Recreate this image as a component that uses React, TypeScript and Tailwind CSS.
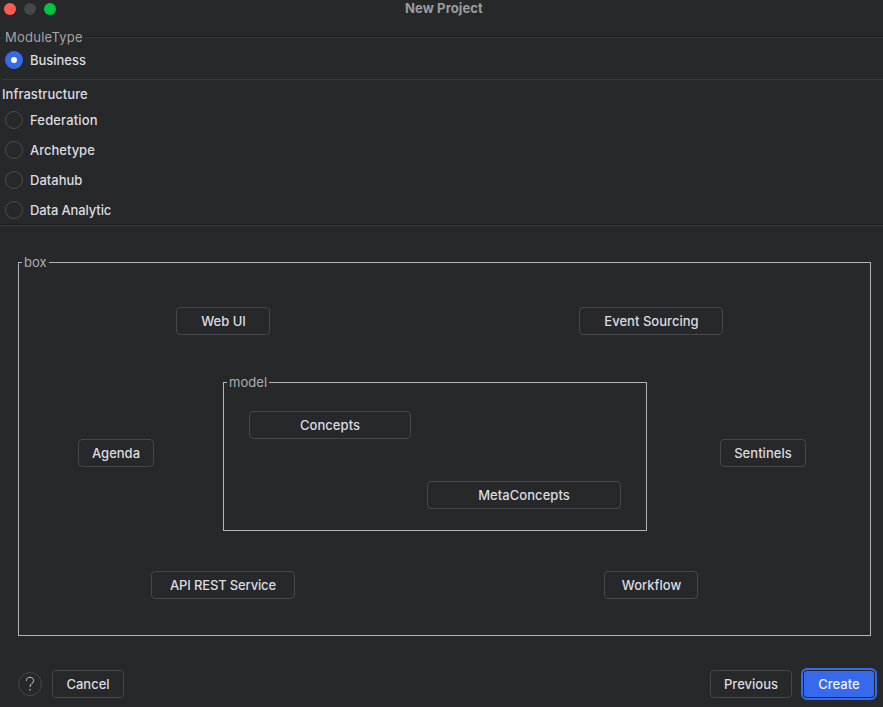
import React from 'react';

function Radio({ label, checked = false, spacing = '' }: { label: string; checked?: boolean; spacing?: string }) {
  return (
    <label className="flex h-[30px] items-center gap-[7px] pl-[5px]">
      {checked ? (
        <span className="flex size-[18px] items-center justify-center rounded-full bg-[#3669ec]">
          <span className="size-[6px] rounded-full bg-white" />
        </span>
      ) : (
        <span className="size-[18px] rounded-full border border-[#4b4c50]" />
      )}
      <span className={`leading-4 ${spacing}`}>{label}</span>
    </label>
  );
}

function Button({ label, className }: { label: string; className: string }) {
  return (
    <button
      className={`flex h-7 shrink-0 items-center justify-center rounded-[4px] border border-[#46474b] leading-4 ${className}`}
    >
      {label}
    </button>
  );
}

function GroupTitle({ label, width }: { label: string; width: string }) {
  return (
    <div className="flex h-px items-center">
      <span className="h-px w-1 bg-[#b4b5b8]" />
      <span className={`shrink-0 pb-[2px] pl-[2px] font-normal leading-4 tracking-[0.05px] text-[#acadb0] ${width}`}>
        {label}
      </span>
      <span className="h-px flex-1 bg-[#b4b5b8]" />
    </div>
  );
}

export default function App() {
  return (
    <div className="flex h-[707px] w-[883px] flex-col overflow-hidden bg-[#27282a] font-['Inter',sans-serif] text-[13px] font-[450] text-[#dbdce0]">
      <header className="grid h-[18px] grid-cols-[1fr_auto_1fr] items-center">
        <div className="flex gap-2 pl-1">
          <span className="size-3 rounded-full bg-[#ff5a52]" />
          <span className="size-3 rounded-full bg-[#464648]" />
          <span className="size-3 rounded-full bg-[#00c543]" />
        </div>
        <h1 className="pb-[2px] pl-[5px] font-bold leading-4 tracking-[0.1px] text-[#9b9c9e]">New Project</h1>
      </header>

      <section className="flex h-[208px] flex-col pt-[18px]">
        <div className="flex h-[2px] items-center">
          <span className="h-[2px] w-[3px] border-t border-[#1b1c1e] bg-[#37383a]" />
          <span className="w-[82px] pl-[2px] font-normal leading-4 tracking-[0.25px] text-[#a3a4a7]">ModuleType</span>
          <span className="h-[2px] flex-1 border-t border-[#1b1c1e] bg-[#37383a]" />
        </div>
        <div className="pt-[7px]">
          <Radio label="Business" checked spacing="tracking-[-0.03px]" />
        </div>
        <div className="ml-[2px] mt-1 h-px bg-[#37383a]" />
        <h2 className="mt-[6px] pl-[2px] leading-4 tracking-[0.04px]">Infrastructure</h2>
        <div className="mt-[3px]">
          <Radio label="Federation" spacing="tracking-[0.15px]" />
          <Radio label="Archetype" spacing="tracking-[0px]" />
          <Radio label="Datahub" />
          <Radio label="Data Analytic" spacing="tracking-[-0.12px]" />
        </div>
      </section>
      <div className="-mt-[2px] h-[2px] shrink-0 border-t border-[#1b1c1e] bg-[#37383a]" />

      <main className="ml-[18px] mt-9 h-[374px] w-[853px] shrink-0">
        <GroupTitle label="box" width="w-[27px]" />
        <div className="flex h-[373px] flex-col border-x border-b border-[#b4b5b8]">
          <div className="flex pl-[157px] pt-[44px]">
            <Button label="Web UI" className="w-[94px] pl-px" />
            <Button label="Event Sourcing" className="ml-[309px] w-[144px] pl-px tracking-[0.03px]" />
          </div>
          <div className="mt-[47px] flex items-start pl-[59px]">
            <Button label="Agenda" className="mt-[57px] w-[76px]" />
            <div className="ml-[69px] h-[149px] w-[424px] shrink-0">
              <GroupTitle label="model" width="w-[42px]" />
              <div className="flex h-[148px] flex-col border-x border-b border-[#b4b5b8] px-[25px] pt-7">
                <Button label="Concepts" className="w-[162px] tracking-[0.05px]" />
                <Button label="MetaConcepts" className="mt-[42px] w-[194px] self-end tracking-[0.05px]" />
              </div>
            </div>
            <Button label="Sentinels" className="ml-[73px] mt-[57px] w-[86px] tracking-[0.05px]" />
          </div>
          <div className="mt-10 flex pl-[132px]">
            <Button label="API REST Service" className="w-[144px] tracking-[-0.15px]" />
            <Button label="Workflow" className="ml-[309px] w-[94px] pl-px" />
          </div>
        </div>
      </main>

      <footer className="mt-8 flex h-8 items-center pl-[18px] pr-[6px]">
        <button className="flex size-6 items-center justify-center rounded-full border border-[#46474b]">
          <svg width="10" height="16" viewBox="0 0 10 16" fill="none" stroke="#cdced2">
            <path d="M1.3 4.8C1.3 2.6 2.8 1.3 5 1.3S8.7 2.7 8.7 4.7C8.7 7.4 5 7.3 5 11" strokeWidth="1" />
            <circle cx="5" cy="13.8" r=".75" fill="#cdced2" stroke="none" />
          </svg>
        </button>
        <Button label="Cancel" className="ml-[10px] w-[72px]" />
        <Button label="Previous" className="ml-auto w-[82px]" />
        <div className="ml-[9px] rounded-[6px] border-2 border-[#3669ec] p-px">
          <button className="flex h-[26px] w-[70px] items-center justify-center rounded-[3px] bg-[#3669ec] font-medium leading-4 text-[#f1f3fd]">
            Create
          </button>
        </div>
      </footer>
    </div>
  );
}
